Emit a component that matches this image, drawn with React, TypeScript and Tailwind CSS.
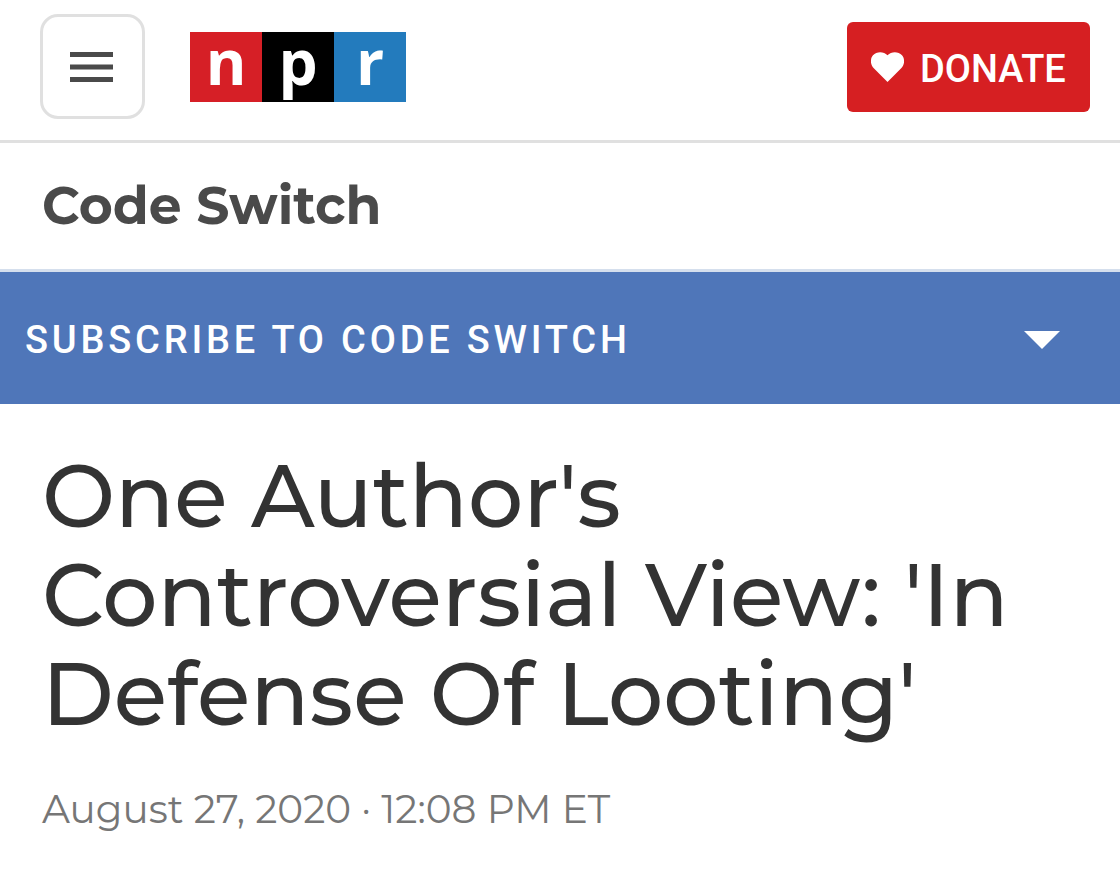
function NprLogo() {
  return (
    <a href="#" aria-label="NPR home" className="flex h-[70px] w-[216px] shrink-0 font-['Open_Sans',sans-serif] text-[62px] leading-[58px] font-bold text-white">
      <span className="flex flex-1 justify-center bg-[#d61f26]">n</span>
      <span className="flex flex-1 justify-center bg-black">p</span>
      <span className="flex flex-1 justify-center bg-[#237bbd]">r</span>
    </a>
  );
}

function Header() {
  return (
    <header className="flex items-start border-b-3 border-[#e0e0e0] pt-[14px] pr-[30px] pb-[21px] pl-10">
      <button aria-label="Open navigation" className="flex size-[105px] shrink-0 items-center justify-center rounded-[18px] border-3 border-[#e0e0e0] bg-white">
        <svg viewBox="0 0 45 30" className="h-[30px] w-[45px]" fill="#4a4a4a">
          <rect width="43" height="5" />
          <rect width="43" height="5" y="12.500" />
          <rect width="43" height="5" y="25" />
        </svg>
      </button>
      <div className="mt-[18px] ml-[45px]">
        <NprLogo />
      </div>
      <a href="#" className="mt-2 ml-auto flex h-[90px] w-[243px] items-center gap-4 rounded-md bg-[#d61f22] pl-6 font-[Roboto,sans-serif] text-[38px] leading-10 font-medium text-white">
        <svg viewBox="0 0 33 30" className="h-[30px] w-[33px] shrink-0" fill="currentColor">
          <path d="M16.500 30L2.800 16.300C-1 12.300-.8 6.500 2 3.300C5.500-.8 12.500-1 16.500 3.200C20.500-1 27.500-.8 31 3.300C33.800 6.500 34 12.300 30.200 16.300Z" />
        </svg>
        <span className="pt-1">DONATE</span>
      </a>
    </header>
  );
}

export default function App() {
  return (
    <div className="min-h-screen bg-white font-[Montserrat,Inter,sans-serif] text-[#333]">
      <Header />
      <div className="border-b-3 border-[#d5dfed] px-[42px] py-8">
        <a href="#" className="block text-[52px] leading-[62px] font-bold text-[#4a4a4a]">Code Switch</a>
      </div>
      <button className="flex h-[132px] w-full items-center justify-between bg-[#4f76b9] pt-1 pr-[60px] pl-[25px] font-[Roboto,sans-serif] text-[38px] font-medium tracking-widest text-white">
        SUBSCRIBE TO CODE SWITCH
        <svg viewBox="0 0 36 18" className="h-[18px] w-9" fill="currentColor">
          <path d="M0 0H36L18 18Z" />
        </svg>
      </button>
      <main className="px-[42px] pt-[43px] pb-10">
        <h1 className="text-[87px] leading-[99px] font-medium">
          One Author's <br />Controversial View: 'In <br />Defense Of Looting'
        </h1>
        <time dateTime="2020-08-27T12:08" className="mt-10 block text-[39px] leading-[50px] text-[#767676]">
          August 27, 2020 · 12:08 PM ET
        </time>
      </main>
    </div>
  );
}
